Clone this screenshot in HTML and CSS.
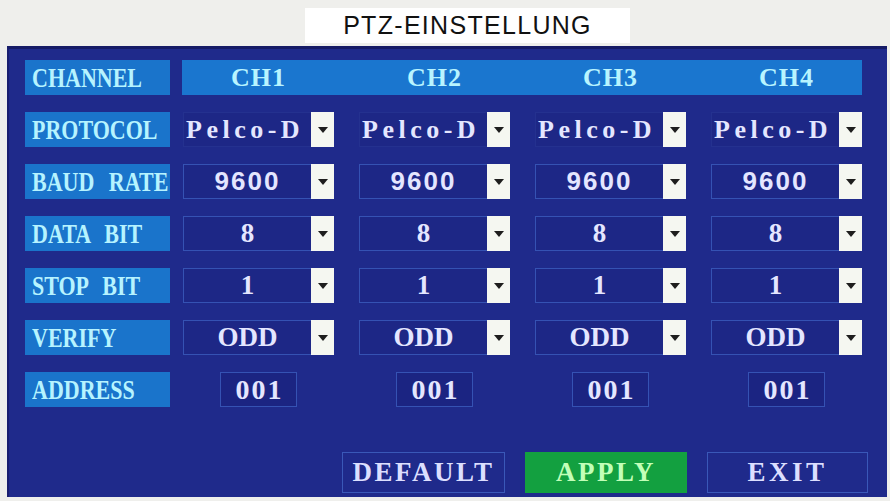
FILE: index.html
```html
<!DOCTYPE html>
<html lang="de">
<head>
<meta charset="utf-8">
<title>PTZ-EINSTELLUNG</title>
<link rel="stylesheet" href="styles.css">
</head>
<body>
<div class="page">
  <header class="titlebar">
    <div class="title">PTZ-EINSTELLUNG</div>
  </header>
  <main class="panel">
    <div class="rows">
      <div class="row">
        <div class="label"><span>CHANNEL</span></div>
        <div class="cells chbar">
          <span class="ch">CH1</span><span class="ch">CH2</span><span class="ch">CH3</span><span class="ch">CH4</span>
        </div>
      </div>
      <div class="row">
        <div class="label"><span>PROTOCOL</span></div>
        <div class="cells">
          <div class="select"><span class="val proto">Pelco-D</span><span class="arrow"></span></div>
          <div class="select"><span class="val proto">Pelco-D</span><span class="arrow"></span></div>
          <div class="select"><span class="val proto">Pelco-D</span><span class="arrow"></span></div>
          <div class="select"><span class="val proto">Pelco-D</span><span class="arrow"></span></div>
        </div>
      </div>
      <div class="row">
        <div class="label"><span>BAUD RATE</span></div>
        <div class="cells">
          <div class="select"><span class="val sans">9600</span><span class="arrow"></span></div>
          <div class="select"><span class="val sans">9600</span><span class="arrow"></span></div>
          <div class="select"><span class="val sans">9600</span><span class="arrow"></span></div>
          <div class="select"><span class="val sans">9600</span><span class="arrow"></span></div>
        </div>
      </div>
      <div class="row">
        <div class="label"><span>DATA BIT</span></div>
        <div class="cells">
          <div class="select"><span class="val serif">8</span><span class="arrow"></span></div>
          <div class="select"><span class="val serif">8</span><span class="arrow"></span></div>
          <div class="select"><span class="val serif">8</span><span class="arrow"></span></div>
          <div class="select"><span class="val serif">8</span><span class="arrow"></span></div>
        </div>
      </div>
      <div class="row">
        <div class="label"><span>STOP BIT</span></div>
        <div class="cells">
          <div class="select"><span class="val serif">1</span><span class="arrow"></span></div>
          <div class="select"><span class="val serif">1</span><span class="arrow"></span></div>
          <div class="select"><span class="val serif">1</span><span class="arrow"></span></div>
          <div class="select"><span class="val serif">1</span><span class="arrow"></span></div>
        </div>
      </div>
      <div class="row">
        <div class="label"><span>VERIFY</span></div>
        <div class="cells">
          <div class="select"><span class="val serif">ODD</span><span class="arrow"></span></div>
          <div class="select"><span class="val serif">ODD</span><span class="arrow"></span></div>
          <div class="select"><span class="val serif">ODD</span><span class="arrow"></span></div>
          <div class="select"><span class="val serif">ODD</span><span class="arrow"></span></div>
        </div>
      </div>
      <div class="row">
        <div class="label"><span>ADDRESS</span></div>
        <div class="cells">
          <div class="addr"><span>001</span></div>
          <div class="addr"><span>001</span></div>
          <div class="addr"><span>001</span></div>
          <div class="addr"><span>001</span></div>
        </div>
      </div>
    </div>
    <div class="buttons">
      <div class="btn b-default">DEFAULT</div>
      <div class="btn b-apply">APPLY</div>
      <div class="btn b-exit">EXIT</div>
    </div>
  </main>
</div>
</body>
</html>
```

FILE: styles.css
```css
* { box-sizing: border-box; }
html, body { margin: 0; padding: 0; }
body {
  background: #efefec;
  width: 890px;
  height: 501px;
  overflow: hidden;
}
.page { width: 890px; height: 501px; }

.titlebar {
  height: 46px;
  display: flex;
  padding-top: 8px;
  padding-left: 305px;
}
.title {
  width: 325px;
  height: 35px;
  background: #ffffff;
  color: #111;
  font-family: "Liberation Sans", Arial, sans-serif;
  font-size: 25px;
  letter-spacing: 1.3px;
  display: flex;
  align-items: center;
  justify-content: center;
}

.panel {
  margin-left: 7px;
  width: 880px;
  height: 451px;
  background: #1f2a8b;
  border-top: 3px solid #161b66;
  border-left: 2px solid #1a1f70;
  padding: 11px 0 4px 16px;
  display: flex;
  flex-direction: column;
}

.rows { display: flex; flex-direction: column; gap: 17px; }
.row { display: flex; height: 35px; }

.label {
  width: 145px;
  height: 35px;
  background: #1a74cb;
  color: #b6f3ff;
  font-family: "Liberation Serif", "Times New Roman", serif;
  font-weight: bold;
  font-size: 22px;
  word-spacing: 9px;
  white-space: nowrap;
  display: flex;
  align-items: center;
  padding-left: 7px;
}
.label span {
  display: inline-block;
  transform: scaleY(1.25);
  transform-origin: left center;
}

.cells {
  margin-left: 13px;
  display: grid;
  grid-template-columns: repeat(4, 151px);
  column-gap: 25px;
  height: 35px;
}
.chbar {
  background: #1a76cf;
  margin-left: 12px;
  padding-left: 1px;
  width: 680px;
}
.ch {
  color: #b8f4ff;
  font-family: "Liberation Serif", "Times New Roman", serif;
  font-weight: bold;
  font-size: 26px;
  letter-spacing: 1px;
  display: flex;
  align-items: center;
  justify-content: center;
}

.select { display: flex; height: 35px; }
.val {
  flex: 1;
  border: 1px solid #3552b3;
  border-right: none;
  background: #1d2786;
  color: #e4e6ff;
  display: flex;
  align-items: center;
  justify-content: center;
  white-space: nowrap;
  overflow: hidden;
}
.proto {
  justify-content: flex-start;
  padding-left: 2px;
  border-color: #24318f;
  font-family: "Liberation Serif", "Times New Roman", serif;
  font-weight: bold;
  font-size: 26px;
  letter-spacing: 4.5px;
}
.sans {
  font-family: "Liberation Sans", Arial, sans-serif;
  font-weight: bold;
  font-size: 26px;
  letter-spacing: 2px;
}
.serif {
  font-family: "Liberation Serif", "Times New Roman", serif;
  font-weight: bold;
  font-size: 27px;
}
.arrow {
  width: 23px;
  height: 35px;
  background: #f5f7f1;
  display: flex;
  align-items: center;
  justify-content: center;
}
.arrow::before {
  content: "";
  width: 0;
  height: 0;
  border-left: 5px solid transparent;
  border-right: 5px solid transparent;
  border-top: 6px solid #1e1e1e;
}

.addr {
  justify-self: center;
  width: 77px;
  height: 35px;
  border: 1px solid #3552b3;
  background: #1b2482;
  color: #e4e6ff;
  display: flex;
  align-items: center;
  justify-content: center;
  font-family: "Liberation Serif", "Times New Roman", serif;
  font-weight: bold;
  font-size: 28px;
  letter-spacing: 2px;
  padding-left: 2px;
}

.buttons {
  margin-top: 45px;
  margin-left: 317px;
  display: flex;
  gap: 20px;
}
.btn {
  height: 41px;
  display: flex;
  align-items: center;
  justify-content: center;
  font-family: "Liberation Serif", "Times New Roman", serif;
  font-weight: bold;
  font-size: 27px;
  letter-spacing: 2.5px;
  color: #dcdfff;
  border: 1px solid #3a58b8;
}
.b-default { width: 163px; }
.b-apply { width: 162px; background: #13a040; border-color: #13a040; color: #c2ffb8; }
.b-exit { width: 161px; letter-spacing: 3.5px; }
```
